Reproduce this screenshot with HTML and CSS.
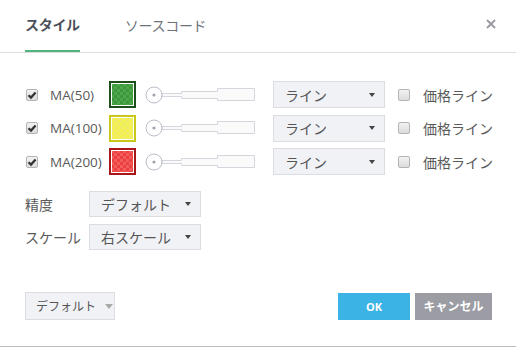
FILE: index.html
```html
<!DOCTYPE html>
<html lang="ja">
  <head>
    <meta charset="UTF-8" />
    <meta name="viewport" content="width=device-width, initial-scale=1.0" />
    <title>インジケーター設定</title>
    <link rel="stylesheet" href="styles.css">
  </head>
  <body>
    <div class="dialog">
      <!-- Tabs -->
      <div class="header">
        <div class="tabs">
          <div class="tab active">スタイル</div>
          <div class="tab">ソースコード</div>
        </div>
        <span class="close">
          <svg width="10" height="10" viewBox="0 0 10 10">
            <path d="M1 1L9 9M9 1L1 9" stroke="#9a9ca3" stroke-width="2" />
          </svg>
        </span>
      </div>

      <div class="content">
        <!-- Moving averages -->
        <div class="ma-list">
          <div class="ma-row">
            <span class="check checked"><svg width="10" height="10" viewBox="0 0 10 10"><path d="M1.5 5.2L4 7.6L8.6 2.4" fill="none" stroke="#333" stroke-width="2.2" /></svg></span>
            <span class="ma-label">MA(50)</span>
            <span class="swatch green"></span>
            <span class="slider"><svg width="110" height="18" viewBox="0 0 110 18"><path d="M17 7.5H36.5V5.5H72.5V2.5H109.5V14.5H72.5V12.5H36.5V10.5H17Z" fill="#fafafa" stroke="#d3d6dc" /><circle cx="9" cy="9" r="8" fill="#fff" stroke="#b9bdc7" /><circle cx="9" cy="9" r="1.6" fill="#a0a4ad" /></svg></span>
            <div class="select wide">ライン<span class="caret"></span></div>
            <span class="check"></span>
            <span class="price-label">価格ライン</span>
          </div>
          <div class="ma-row">
            <span class="check checked"><svg width="10" height="10" viewBox="0 0 10 10"><path d="M1.5 5.2L4 7.6L8.6 2.4" fill="none" stroke="#333" stroke-width="2.2" /></svg></span>
            <span class="ma-label">MA(100)</span>
            <span class="swatch yellow"></span>
            <span class="slider"><svg width="110" height="18" viewBox="0 0 110 18"><path d="M17 7.5H36.5V5.5H72.5V2.5H109.5V14.5H72.5V12.5H36.5V10.5H17Z" fill="#fafafa" stroke="#d3d6dc" /><circle cx="9" cy="9" r="8" fill="#fff" stroke="#b9bdc7" /><circle cx="9" cy="9" r="1.6" fill="#a0a4ad" /></svg></span>
            <div class="select wide">ライン<span class="caret"></span></div>
            <span class="check"></span>
            <span class="price-label">価格ライン</span>
          </div>
          <div class="ma-row">
            <span class="check checked"><svg width="10" height="10" viewBox="0 0 10 10"><path d="M1.5 5.2L4 7.6L8.6 2.4" fill="none" stroke="#333" stroke-width="2.2" /></svg></span>
            <span class="ma-label">MA(200)</span>
            <span class="swatch red"></span>
            <span class="slider"><svg width="110" height="18" viewBox="0 0 110 18"><path d="M17 7.5H36.5V5.5H72.5V2.5H109.5V14.5H72.5V12.5H36.5V10.5H17Z" fill="#fafafa" stroke="#d3d6dc" /><circle cx="9" cy="9" r="8" fill="#fff" stroke="#b9bdc7" /><circle cx="9" cy="9" r="1.6" fill="#a0a4ad" /></svg></span>
            <div class="select wide">ライン<span class="caret"></span></div>
            <span class="check"></span>
            <span class="price-label">価格ライン</span>
          </div>
        </div>

        <!-- Precision / scale -->
        <div class="settings">
          <div class="setting-row">
            <span class="setting-label">精度</span>
            <div class="select">デフォルト<span class="caret"></span></div>
          </div>
          <div class="setting-row">
            <span class="setting-label">スケール</span>
            <div class="select">右スケール<span class="caret"></span></div>
          </div>
        </div>
      </div>

      <div class="footer">
        <div class="preset">デフォルト<span class="caret light"></span></div>
        <div class="actions">
          <button type="button" class="btn ok">OK</button>
          <button type="button" class="btn cancel">キャンセル</button>
        </div>
      </div>
    </div>
  </body>
</html>
```

FILE: styles.css
```css
body {
  margin: 0;
  padding: 0;
  background-color: #fff;
  font-family: "Open Sans", "Noto Sans CJK JP", sans-serif;
  color: #555;
}

.dialog {
  width: 516px;
  height: 347px;
  box-sizing: border-box;
  border-bottom: 1px solid #bcbcbc;
  display: flex;
  flex-direction: column;
}

.header {
  height: 52px;
  border-bottom: 1px solid #dcdde1;
  display: flex;
  align-items: stretch;
  justify-content: space-between;
  padding: 0 20px 0 25px;
}

.tabs {
  display: flex;
  gap: 45px;
}

.tab {
  font-size: 14px;
  line-height: 52px;
  height: 52px;
  box-sizing: border-box;
  color: #6e727c;
  letter-spacing: -0.3px;
}

.tab.active {
  font-weight: bold;
  color: #4b4f59;
  border-bottom: 2px solid #4fb57a;
  line-height: 50px;
}

.close {
  display: flex;
  align-items: center;
  margin-top: -5px;
}

.content {
  padding: 28px 0 0 26px;
}

.ma-list {
  display: flex;
  flex-direction: column;
  gap: 6.5px;
}

.ma-row {
  display: flex;
  align-items: center;
  height: 27px;
}

.ma-row > * {
  flex-shrink: 0;
}

.check {
  width: 12px;
  height: 12px;
  box-sizing: border-box;
  border: 1px solid #b4b4b4;
  border-radius: 2px;
  background: linear-gradient(#f2f2f2, #dcdcdc);
  display: flex;
  align-items: center;
  justify-content: center;
}

.ma-label {
  font-size: 13.5px;
  width: 59px;
  margin-left: 12px;
  color: #5a5a5a;
}

.swatch {
  width: 27px;
  height: 27px;
  box-sizing: border-box;
  border: 2px solid;
  box-shadow: inset 0 0 0 1px #fff;
  background-size: 6px 6px;
}

.swatch.green {
  border-color: #1c4f1c;
  background-image: repeating-conic-gradient(#3d983d 0 25%, #4ba84b 0 50%);
}

.swatch.yellow {
  border-color: #c9c81a;
  background-image: repeating-conic-gradient(#f4f24a 0 25%, #eceb6c 0 50%);
}

.swatch.red {
  border-color: #a8161a;
  background-image: repeating-conic-gradient(#ee3f3f 0 25%, #f25e5e 0 50%);
}

.slider {
  display: flex;
  margin-left: 9px;
  margin-right: 18px;
}

.select {
  width: 112px;
  height: 26px;
  box-sizing: border-box;
  border: 1px solid #dcdde2;
  background-color: #f1f2f6;
  font-size: 14px;
  color: #555;
  display: flex;
  align-items: center;
  justify-content: space-between;
  padding: 0 9px 0 11px;
}

.select.wide {
  height: 27px;
  margin-right: 13px;
}

.caret {
  width: 0;
  height: 0;
  border-left: 3.5px solid transparent;
  border-right: 3.5px solid transparent;
  border-top: 4px solid #444;
}

.caret.light {
  border-left-width: 4px;
  border-right-width: 4px;
  border-top: 5px solid #aaa;
}

.price-label {
  font-size: 14px;
  margin-left: 13px;
  color: #5a5a5a;
}

.settings {
  margin-top: 16px;
  margin-left: -1px;
  display: flex;
  flex-direction: column;
  gap: 7px;
}

.setting-row {
  display: flex;
  align-items: center;
}

.setting-label {
  width: 64px;
  font-size: 14px;
  color: #5a5a5a;
}

.footer {
  margin-top: auto;
  margin-bottom: 26px;
  padding: 0 24px 0 25px;
  display: flex;
  justify-content: space-between;
  align-items: center;
}

.preset {
  width: 90px;
  height: 28px;
  box-sizing: border-box;
  border: 1px solid #dcdde2;
  background-color: #f1f2f6;
  font-size: 12px;
  color: #555;
  display: flex;
  align-items: center;
  gap: 9px;
  padding-left: 10px;
}

.actions {
  display: flex;
  gap: 5px;
}

.btn {
  height: 27px;
  border: none;
  color: #fff;
  font-family: "Open Sans", "Noto Sans CJK JP", sans-serif;
  font-size: 11px;
  font-weight: bold;
  padding: 0;
  cursor: pointer;
}

.btn.ok {
  width: 72px;
  background-color: #3bb4e5;
}

.btn.cancel {
  width: 77px;
  background-color: #9b9ca4;
  font-size: 12px;
}
```
